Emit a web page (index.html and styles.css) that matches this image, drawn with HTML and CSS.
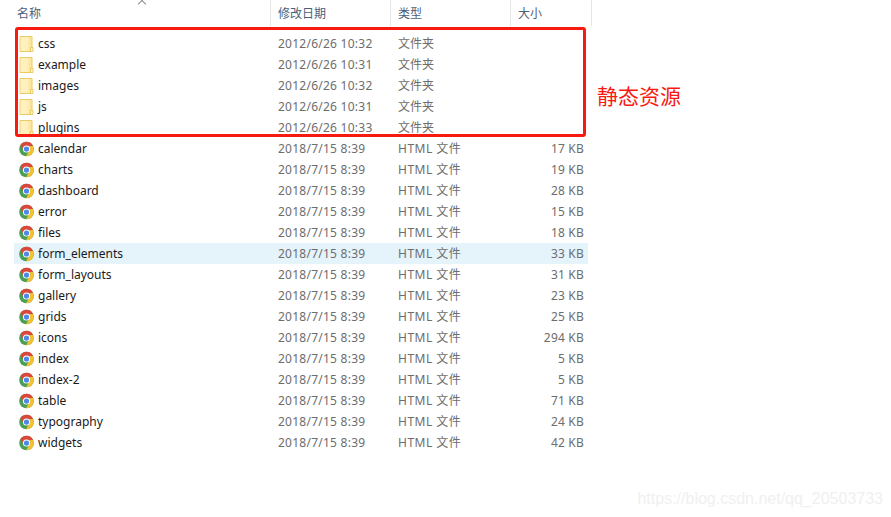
FILE: index.html
```html
<!DOCTYPE html>
<html lang="zh">
<head>
<meta charset="utf-8">
<title>文件列表</title>
<link rel="stylesheet" href="styles.css">
</head>
<body>
<svg class="defs" width="0" height="0" aria-hidden="true">
  <defs>
    <symbol id="folder" viewBox="0 0 14 16">
      <path d="M.5.5H12.5V15.5H.5Z" fill="#fde7a0" stroke="#eccb62"/>
      <path d="M1 1H9V15H1Z" fill="#fff0bd"/>
      <path d="M11 11.5H13.500V15.500H11Z" fill="#fff3c8" stroke="#eccb62"/>
    </symbol>
    <symbol id="chrome" viewBox="0 0 16 16">
      <circle cx="8" cy="8" r="7.800" fill="#4a9f55"/>
      <path d="M8 .2A7.800 7.800 0 0 1 15 4.800L8 5Q4.500 5 3.500 8L1.400 4A7.800 7.800 0 0 1 8 .2Z" fill="#d9483b"/>
      <path d="M15 4.800A7.800 7.800 0 0 1 7.500 15.800L11 9.500 10.500 5Z" fill="#f2c230"/>
      <circle cx="8" cy="8" r="3.800" fill="#fff"/>
      <circle cx="8" cy="8" r="2.800" fill="#4f88e8"/>
    </symbol>
  </defs>
</svg>
<main class="explorer">
  <div class="row header">
    <div class="cell head-name">名称<span class="sort"></span></div>
    <div class="cell head-cell">修改日期</div>
    <div class="cell head-cell">类型</div>
    <div class="cell head-cell">大小</div>
  </div>
  <div class="list">
    <div class="row item"><div class="cell name"><svg class="icon"><use href="#folder"/></svg>css</div><div class="cell date">2012/6/26 10:32</div><div class="cell">文件夹</div><div class="cell size"></div></div>
    <div class="row item"><div class="cell name"><svg class="icon"><use href="#folder"/></svg>example</div><div class="cell date">2012/6/26 10:31</div><div class="cell">文件夹</div><div class="cell size"></div></div>
    <div class="row item"><div class="cell name"><svg class="icon"><use href="#folder"/></svg>images</div><div class="cell date">2012/6/26 10:32</div><div class="cell">文件夹</div><div class="cell size"></div></div>
    <div class="row item"><div class="cell name"><svg class="icon"><use href="#folder"/></svg>js</div><div class="cell date">2012/6/26 10:31</div><div class="cell">文件夹</div><div class="cell size"></div></div>
    <div class="row item"><div class="cell name"><svg class="icon"><use href="#folder"/></svg>plugins</div><div class="cell date">2012/6/26 10:33</div><div class="cell">文件夹</div><div class="cell size"></div></div>
    <div class="row item"><div class="cell name"><svg class="icon"><use href="#chrome"/></svg>calendar</div><div class="cell date">2018/7/15 8:39</div><div class="cell type">HTML 文件</div><div class="cell size">17 KB</div></div>
    <div class="row item"><div class="cell name"><svg class="icon"><use href="#chrome"/></svg>charts</div><div class="cell date">2018/7/15 8:39</div><div class="cell type">HTML 文件</div><div class="cell size">19 KB</div></div>
    <div class="row item"><div class="cell name"><svg class="icon"><use href="#chrome"/></svg>dashboard</div><div class="cell date">2018/7/15 8:39</div><div class="cell type">HTML 文件</div><div class="cell size">28 KB</div></div>
    <div class="row item"><div class="cell name"><svg class="icon"><use href="#chrome"/></svg>error</div><div class="cell date">2018/7/15 8:39</div><div class="cell type">HTML 文件</div><div class="cell size">15 KB</div></div>
    <div class="row item"><div class="cell name"><svg class="icon"><use href="#chrome"/></svg>files</div><div class="cell date">2018/7/15 8:39</div><div class="cell type">HTML 文件</div><div class="cell size">18 KB</div></div>
    <div class="row item selected"><div class="cell name"><svg class="icon"><use href="#chrome"/></svg>form_elements</div><div class="cell date">2018/7/15 8:39</div><div class="cell type">HTML 文件</div><div class="cell size">33 KB</div></div>
    <div class="row item"><div class="cell name"><svg class="icon"><use href="#chrome"/></svg>form_layouts</div><div class="cell date">2018/7/15 8:39</div><div class="cell type">HTML 文件</div><div class="cell size">31 KB</div></div>
    <div class="row item"><div class="cell name"><svg class="icon"><use href="#chrome"/></svg>gallery</div><div class="cell date">2018/7/15 8:39</div><div class="cell type">HTML 文件</div><div class="cell size">23 KB</div></div>
    <div class="row item"><div class="cell name"><svg class="icon"><use href="#chrome"/></svg>grids</div><div class="cell date">2018/7/15 8:39</div><div class="cell type">HTML 文件</div><div class="cell size">25 KB</div></div>
    <div class="row item"><div class="cell name"><svg class="icon"><use href="#chrome"/></svg>icons</div><div class="cell date">2018/7/15 8:39</div><div class="cell type">HTML 文件</div><div class="cell size">294 KB</div></div>
    <div class="row item"><div class="cell name"><svg class="icon"><use href="#chrome"/></svg>index</div><div class="cell date">2018/7/15 8:39</div><div class="cell type">HTML 文件</div><div class="cell size">5 KB</div></div>
    <div class="row item"><div class="cell name"><svg class="icon"><use href="#chrome"/></svg>index-2</div><div class="cell date">2018/7/15 8:39</div><div class="cell type">HTML 文件</div><div class="cell size">5 KB</div></div>
    <div class="row item"><div class="cell name"><svg class="icon"><use href="#chrome"/></svg>table</div><div class="cell date">2018/7/15 8:39</div><div class="cell type">HTML 文件</div><div class="cell size">71 KB</div></div>
    <div class="row item"><div class="cell name"><svg class="icon"><use href="#chrome"/></svg>typography</div><div class="cell date">2018/7/15 8:39</div><div class="cell type">HTML 文件</div><div class="cell size">24 KB</div></div>
    <div class="row item"><div class="cell name"><svg class="icon"><use href="#chrome"/></svg>widgets</div><div class="cell date">2018/7/15 8:39</div><div class="cell type">HTML 文件</div><div class="cell size">42 KB</div></div>
  </div>
</main>
<div class="callout"></div>
<div class="callout-label">静态资源</div>
<div class="watermark">https://blog.csdn.net/qq_20503733</div>
</body>
</html>
```
FILE: styles.css
```css
html, body {
  margin: 0;
  padding: 0;
  background: #fff;
}
body {
  width: 891px;
  height: 517px;
  position: relative;
  overflow: hidden;
  font-family: "Noto Sans", "Noto Sans CJK SC", sans-serif;
  font-size: 12px;
  line-height: 16px;
  color: #6d6d6d;
}
.defs {
  position: absolute;
}
.explorer {
  width: 592px;
  padding-left: 14px;
  box-sizing: border-box;
}
.row {
  display: grid;
  grid-template-columns: 257px 120px 120px 76px;
  width: 574px;
}
.cell {
  display: flex;
  align-items: center;
  padding-left: 7px;
  white-space: nowrap;
}
.cell.date {
  letter-spacing: .25px;
}
.cell.type {
  letter-spacing: .5px;
}
.header {
  width: 578px;
  grid-template-columns: 257px 120px 120px 81px;
  height: 26px;
  color: #4c607a;
}
.head-name {
  padding-left: 3px;
  padding-top: 2px;
  position: relative;
  border-right: 1px solid #e5e5e5;
}
.head-cell {
  padding-top: 2px;
  border-right: 1px solid #e5e5e5;
}
.sort {
  position: absolute;
  left: 125px;
  top: 1px;
  width: 5px;
  height: 5px;
  border-left: 1px solid #8a8a8a;
  border-top: 1px solid #8a8a8a;
  transform: rotate(45deg);
}
.list {
  padding-top: 7px;
}
.item {
  height: 21px;
}
.selected {
  background: #e5f3fb;
}
.name {
  color: #1a1a1a;
  padding-left: 5px;
  gap: 4px;
}
.icon {
  width: 15px;
  height: 16px;
  flex: none;
}
.size {
  justify-content: flex-end;
  padding: 0 3px 0 0;
  letter-spacing: .2px;
}
.callout {
  position: absolute;
  left: 15px;
  top: 27px;
  width: 571px;
  height: 110px;
  box-sizing: border-box;
  border: 3px solid #f8190f;
  border-radius: 3px;
}
.callout-label {
  position: absolute;
  left: 597px;
  top: 81px;
  font-size: 21px;
  line-height: 28px;
  color: #f8190f;
  font-family: "Noto Sans CJK SC", sans-serif;
  font-weight: 400;
}
.watermark {
  position: absolute;
  right: 8px;
  top: 488px;
  font-size: 16px;
  line-height: 22px;
  color: #f0f0f0;
  font-family: "Liberation Sans", sans-serif;
}
```
